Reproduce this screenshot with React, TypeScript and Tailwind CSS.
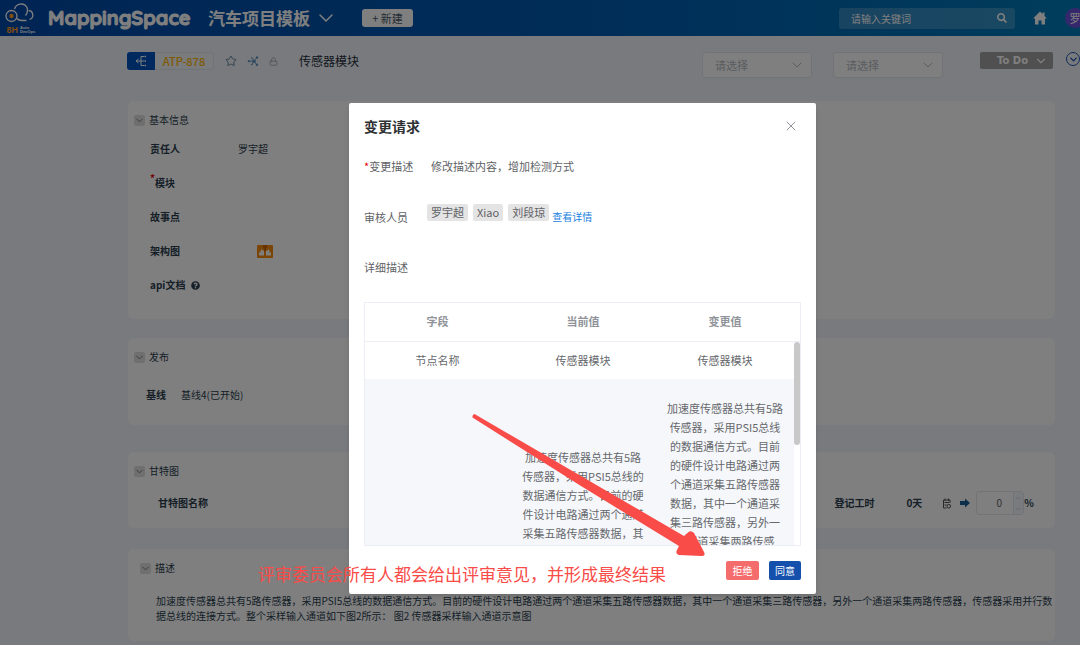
import { useState } from "react";
import type { ReactNode } from "react";
import { ChevronDown, ChevronUp, Lock, Star, X } from "lucide-react";
import { FaQuestionCircle, FaSearch } from "react-icons/fa";

const REVIEWERS = ["罗宇超", "Xiao", "刘段琼"];

const DETAIL =
  "加速度传感器总共有5路传感器，采用PSI5总线的数据通信方式。目前的硬件设计电路通过两个通道采集五路传感器数据，其中一个通道采集三路传感器，另外一个通道采集两路传感器，传感器采用并行数据总线的连接方式。整个采样输入通道如下图2所示： 图2 传感器采样输入通道示意图";

function Logo() {
  return (
    <svg
      viewBox="0 0 34 32"
      className="h-8 w-[34px] shrink-0 font-['Liberation_Sans',sans-serif]"
      fill="none"
      aria-label="8H Auto DevOps"
    >
      <path
        d="M10.500 7A6.800 6.800 0 0 1 23 5.500Q24.500 9.500 21.500 13.500M24.500 8.500A4.600 4.600 0 0 1 25.500 17.500M22.500 18.500H18Q14.500 18.500 12.800 16.500"
        stroke="#fff"
        strokeWidth="1.300"
      />
      <circle cx="7.500" cy="14" r="5.500" stroke="#fff" strokeWidth="1.300" />
      <circle cx="7.500" cy="14" r="2.200" fill="#ff9a1f" />
      <text x="2.500" y="30.500" fontSize="9" fontWeight="700" fill="#ff9a1f">
        8H
      </text>
      <text x="16" y="27" fontSize="4" fontWeight="700" fill="#fff">
        Auto
      </text>
      <text x="16" y="31" fontSize="4" fontWeight="700" fill="#fff">
        DevOps
      </text>
    </svg>
  );
}

function Header() {
  return (
    <header className="flex h-9 items-center bg-linear-to-r from-[#004aa8] via-[#0058b0] to-[#007ab8] pl-1 text-white">
      <Logo />
      <span className="ml-[10px] w-[148px] font-[Quicksand,Lato,sans-serif] text-[20px] leading-8 font-black [-webkit-text-stroke:1px_white]">
        MappingSpace
      </span>
      <button className="ml-3 flex items-center gap-1 text-[17px] font-bold">
        汽车项目模板
        <ChevronDown className="h-6 w-6" strokeWidth={1.5} />
      </button>
      <button className="ml-6 h-[18px] w-[51px] rounded-[3px] bg-white text-[11px] leading-[18px] text-[#4a5a6a]">
        + 新建
      </button>
      <label className="ml-auto flex h-[21px] w-44 items-center rounded-[3px] bg-white/20 px-3">
        <input
          aria-label="搜索"
          placeholder="请输入关键词"
          className="min-w-0 flex-1 bg-transparent text-[10px] outline-none placeholder:text-white"
        />
        <FaSearch className="-mr-1 h-[10px] w-[10px]" />
      </label>
      <a href="#home" aria-label="首页" className="ml-[18px]">
        <svg viewBox="0 0 14 14" className="h-[14px] w-[14px]" fill="currentColor">
          <path d="M7 0.500L9.500 3V1.500H11.500V5L14 7.500H12V13.500H8.500V9.500H5.500V13.500H2V7.500H0z" />
        </svg>
      </a>
      <button className="-mr-[5px] ml-[18px] h-5 w-5 rounded-full bg-[#6a4fd8] text-[11px] leading-5">罗</button>
    </header>
  );
}

function PlaceholderSelect({ label }: { label: string }) {
  return (
    <div className="grid w-[110px] items-center">
      <select
        aria-label={label}
        className="col-start-1 row-start-1 h-[26px] appearance-none rounded-[3px] border border-[#e4e7ed] bg-white px-3 text-[11px] text-[#b4b8c0]"
      >
        <option>请选择</option>
      </select>
      <ChevronDown
        className="pointer-events-none col-start-1 row-start-1 mr-[7px] h-4 w-4 justify-self-end text-[#b4b8c0]"
        strokeWidth={1.5}
      />
    </div>
  );
}

function Toolbar() {
  return (
    <div className="-mr-[25px] flex items-start">
      <div className="flex h-[18px] items-stretch rounded-[3px] border border-[#e4e7ed] bg-white/10 text-[11px] leading-4">
        <span className="-my-px -ml-px flex w-7 items-center justify-center rounded-l-[3px] bg-[#0052c0] text-white">
          <svg viewBox="0 0 12 12" className="h-3 w-3" fill="none" stroke="currentColor">
            <path d="M1 6H9M3.500 4L1 6L3.500 8M9 1.500H6V10.500H9" />
            <path d="M9.500 1.500h1.500M9.500 6h1.500M9.500 10.500h1.500" strokeWidth="1.500" />
          </svg>
        </span>
        <a href="#ATP-878" className="w-[58px] text-center font-medium text-[#ffb400]">
          ATP-878
        </a>
      </div>
      <div className="ml-[11px] flex h-[18px] items-center gap-[10px] text-[#6584a0]">
        <button aria-label="收藏">
          <Star className="h-3 w-3" strokeWidth={2} />
        </button>
        <button aria-label="关联">
          <svg viewBox="0 0 12 12" className="h-3 w-3 text-[#5f95c4]" fill="currentColor">
            <path
              d="M2 6.200H7L9.500 3M7 6.200L9.500 9.500M7 6.200L5 3M7 6.200L5 9.500"
              stroke="currentColor"
              strokeWidth="0.900"
              fill="none"
            />
            <circle cx="7" cy="6.200" r="1.800" />
            <circle cx="1.800" cy="6.200" r="1.100" />
            <circle cx="10" cy="2.500" r="1.200" />
            <circle cx="10" cy="9.800" r="1.200" />
            <circle cx="4.800" cy="2.800" r="0.800" />
            <circle cx="4.800" cy="9.600" r="0.800" />
          </svg>
        </button>
        <button aria-label="锁定">
          <Lock className="h-[9px] w-[9px] text-[#9a9ea6]" strokeWidth={2} />
        </button>
      </div>
      <h1 className="ml-[21px] text-[12px] leading-[18px] text-[#1f2d3d]">传感器模块</h1>
      <div className="ml-auto flex gap-[21px]">
        <PlaceholderSelect label="版本" />
        <PlaceholderSelect label="迭代" />
      </div>
      <button className="ml-[37px] flex h-[17px] w-[73px] items-center justify-end gap-[6px] rounded-[2px] bg-[#a0a0a0] pr-[5px] font-['DejaVu_Sans',sans-serif] text-[10px] font-bold text-white">
        To Do
        <ChevronDown className="h-[14px] w-[14px]" strokeWidth={2} />
      </button>
      <button
        aria-label="更多"
        className="ml-[13px] flex h-[14px] w-[14px] items-center justify-center rounded-full border border-[#1f55b0] text-[#1f55b0]"
      >
        <ChevronDown className="h-[11px] w-[11px]" strokeWidth={3} />
      </button>
    </div>
  );
}

function Section({ title, className, children }: { title: string; className: string; children: ReactNode }) {
  const [open, setOpen] = useState(true);
  return (
    <section className={`rounded-md bg-white pt-[11px] pb-3 text-[10px] leading-4 text-[#2c3e50] ${className}`}>
      <button className="flex items-center gap-1" onClick={() => setOpen(!open)} aria-expanded={open}>
        <span className="flex h-[11px] w-[11px] items-center justify-center rounded-[2px] bg-[#dedede] text-[#707070]">
          <ChevronDown className="h-[11px] w-[11px]" />
        </span>
        {title}
      </button>
      {open ? children : null}
    </section>
  );
}

function Field({ label, children }: { label: ReactNode; children?: ReactNode }) {
  return (
    <div className="flex h-[18px] items-center">
      <dt className="w-[88px] font-bold">{label}</dt>
      <dd>{children}</dd>
    </div>
  );
}

function BasicInfo() {
  return (
    <dl className="mt-3 flex flex-col gap-4 pl-4">
      <Field label="责任人">罗宇超</Field>
      <Field
        label={
          <>
            <sup className="text-[10px] text-red-600">*</sup>模块
          </>
        }
      />
      <Field label="故事点" />
      <Field label="架构图">
        <svg viewBox="0 0 16 13" className="ml-[19px] h-[13px] w-4">
          <rect width="16" height="13" rx="1" fill="#f78a0c" />
          <path d="M6 0H10V3H9V6.500H7V3H6z" fill="#d06400" />
          <path
            d="M3.500 5.500L5 4V5.500H7V10.500H2V7.500H3.500zM11 4L12.500 5.500V7.500H14V10.500H9V5.500H11z"
            fill="#fff"
          />
        </svg>
      </Field>
      <Field
        label={
          <span className="flex items-center gap-[6px]">
            api文档 <FaQuestionCircle className="h-[9px] w-[9px]" />
          </span>
        }
      />
    </dl>
  );
}

function GanttRow() {
  return (
    <div className="mt-3 flex h-6 items-center pr-[15px] pl-6 font-bold">
      <span>甘特图名称</span>
      <label htmlFor="progress" className="ml-auto">
        登记工时
      </label>
      <span className="ml-8">0天</span>
      <svg viewBox="0 0 10 11" className="ml-5 h-[11px] w-[10px]" fill="none" stroke="#505050">
        <path d="M1.500 2H8V5M1.500 2V10H4.500M3 0.500V3M6.500 0.500V3M2.500 4.500H7M2.500 7H4.500" />
        <circle cx="6.800" cy="8.200" r="1.800" />
      </svg>
      <svg viewBox="0 0 10 10" className="ml-2 h-[10px] w-[10px]" fill="#1a5f96">
        <path d="M0 3H5V0.500L10 5L5 9.500V7H0z" />
      </svg>
      <div className="ml-[6px] flex h-6 w-12 rounded-[3px] border border-[#e4e7ed]">
        <input
          id="progress"
          type="text"
          inputMode="numeric"
          defaultValue="0"
          className="min-w-0 flex-1 bg-transparent pl-2 text-center text-[10px] font-normal text-[#606266] outline-none"
        />
        <span className="flex w-[10px] flex-col justify-around border-l border-[#e4e7ed] bg-[#f5f7fa] text-[#c0c4cc]">
          <ChevronUp className="h-2 w-2" />
          <ChevronDown className="h-2 w-2" />
        </span>
      </div>
      <span>%</span>
    </div>
  );
}

function ChangeTable() {
  return (
    <div className="relative mt-[25px] h-[244px] overflow-hidden border border-[#ebeef5] text-[11px] leading-[19px] text-[#66686c]">
      <table className="w-full table-fixed border-collapse text-center">
        <thead>
          <tr className="h-[38px] border-b border-[#ebeef5] text-[#909399]">
            <th className="w-[145px] font-bold">字段</th>
            <th className="w-[146px] font-bold">当前值</th>
            <th className="font-bold">变更值</th>
            <th className="w-[6px]" />
          </tr>
        </thead>
        <tbody>
          <tr className="h-[38px]">
            <td>节点名称</td>
            <td>传感器模块</td>
            <td>传感器模块</td>
            <td />
          </tr>
          <tr className="align-top">
            <td className="bg-[#f5f7fb]" />
            <td className="bg-[#f5f7fb] px-[11px] pt-[69px]">{DETAIL}</td>
            <td className="bg-[#f5f7fb] px-[10px] pt-5">{DETAIL}</td>
            <td />
          </tr>
        </tbody>
      </table>
      <span className="absolute top-[39px] right-0 h-[103px] w-[6px] rounded-full bg-[#c8c8c8]" />
    </div>
  );
}

function ChangeRequestDialog() {
  return (
    <div className="absolute inset-0 flex items-start justify-center overflow-hidden bg-black/50 pt-[103px] pl-[85px]">
      <div
        role="dialog"
        aria-labelledby="dialog-title"
        className="w-[467px] rounded-[2px] bg-white px-[15px] pt-[13px] pb-[14px] text-[11px] leading-5 text-[#606266] shadow-md"
      >
        <div className="flex items-center justify-between pr-[2px]">
          <h2 id="dialog-title" className="text-[14px] font-bold text-[#303133]">
            变更请求
          </h2>
          <button aria-label="关闭" className="text-[#909399]">
            <X className="h-4 w-4" strokeWidth={1.5} />
          </button>
        </div>
        <div className="mt-5 flex">
          <span className="w-[67px]">
            <span className="text-red-600">*</span>变更描述
          </span>
          <span>修改描述内容，增加检测方式</span>
        </div>
        <div className="mt-[21px] flex h-[30px] items-end">
          <span className="w-[63px]">审核人员</span>
          <ul className="flex gap-[5px] self-center">
            {REVIEWERS.map((name) => (
              <li key={name} className="rounded-[2px] bg-[#e4e4e4] px-1 leading-[17px]">
                {name}
              </li>
            ))}
          </ul>
          <a href="#reviewers" className="ml-[3px] text-[10px] text-[#1a7fe0]">
            查看详情
          </a>
        </div>
        <p className="mt-[30px]">详细描述</p>
        <ChangeTable />
        <div className="mt-[15px] flex justify-end gap-[10px] text-[10px] leading-[19px] text-white">
          <button className="w-[33px] rounded-[2px] bg-[#f56c6c]">拒绝</button>
          <button className="w-8 rounded-[2px] bg-[#1650ad]">同意</button>
        </div>
      </div>
    </div>
  );
}

// red callout pointing at the reject / approve buttons
function Annotation() {
  return (
    <>
      <svg viewBox="0 0 234 144" className="absolute top-[413px] left-[471px] h-[144px] w-[234px]" fill="#f94b48">
        <path d="M3.500 1L213 123L217 119.500Q220 117 223 120L233 139Q235 143 231 143L208 142Q204 141 206 137L208 133L110 73L1.500 4.500Q1 2 3.500 1Z" />
      </svg>
      <p className="absolute top-[562px] left-[258px] text-[17px] leading-6 whitespace-nowrap text-[#f94b48]">
        评审委员会所有人都会给出评审意见，并形成最终结果
      </p>
    </>
  );
}

export default function App() {
  return (
    <div className="relative min-h-screen overflow-hidden bg-[#f2f5fa] font-['Noto_Sans_CJK_SC',sans-serif]">
      <Header />
      <main className="pt-4 pr-[25px] pb-1 pl-[127px]">
        <Toolbar />
        <div className="mt-[23px] pl-px">
          <Section title="基本信息" className="min-h-[218px] px-[6px]">
            <BasicInfo />
          </Section>
          <Section title="发布" className="mt-[19px] min-h-[87px] px-[6px]">
            <div className="mt-[22px] flex gap-[15px] pl-3">
              <span className="font-bold">基线</span>
              <span>基线4(已开始)</span>
            </div>
          </Section>
          <Section title="甘特图" className="mt-[27px] min-h-[76px] px-[6px]">
            <GanttRow />
          </Section>
          <Section title="描述" className="mt-[21px] min-h-[92px] px-3">
            <p className="mt-[17px] -mr-3 pl-4 leading-[15px]">{DETAIL}</p>
          </Section>
        </div>
      </main>
      <ChangeRequestDialog />
      <Annotation />
    </div>
  );
}
